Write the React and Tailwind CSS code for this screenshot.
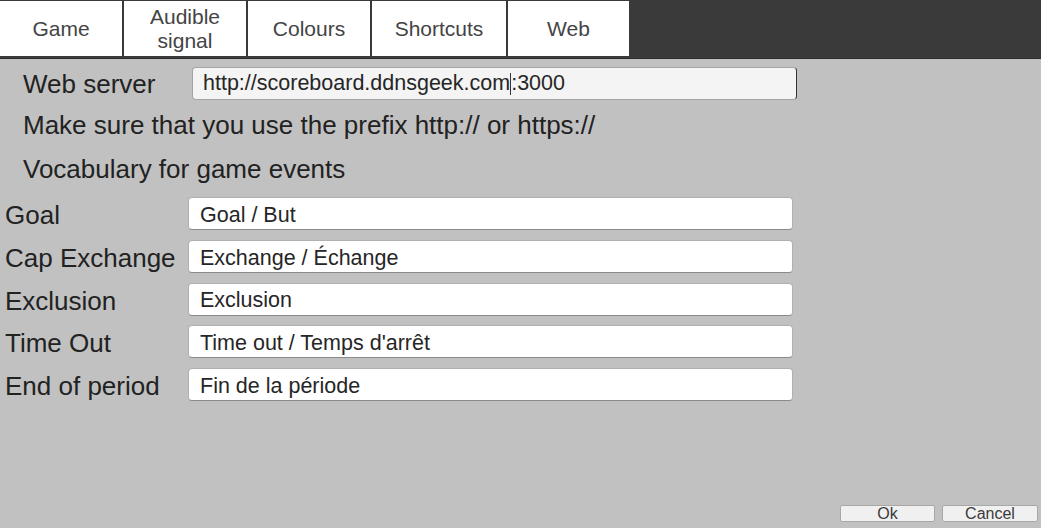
import React from 'react';

const tabs = [
  { label: 'Game', w: 'w-[122px]' },
  { label: 'Audible signal', w: 'w-[122px]', two: true },
  { label: 'Colours', w: 'w-[122px]' },
  { label: 'Shortcuts', w: 'w-[134px]' },
  { label: 'Web', w: 'w-[121px]' },
];

const events = [
  { label: 'Goal', value: 'Goal / But' },
  { label: 'Cap Exchange', value: 'Exchange / Échange' },
  { label: 'Exclusion', value: 'Exclusion' },
  { label: 'Time Out', value: "Time out / Temps d'arrêt" },
  { label: 'End of period', value: 'Fin de la période' },
];

export default function App() {
  return (
    <div
      className="h-screen w-full flex flex-col bg-[#c1c1c1] text-[#222] overflow-hidden"
      style={{ fontFamily: '"Liberation Sans", Arial, sans-serif' }}
    >
      {/* Tab bar */}
      <div className="h-[59px] bg-[#3a3a3a] flex gap-[2px] pt-px pb-[2px] border-b border-[#2e2e2e]">
        {tabs.map((t) => (
          <div
            key={t.label}
            className={`${t.w} bg-white flex items-center justify-center text-center text-[21px] leading-[24px] text-[#444]`}
          >
            {t.two ? (
              <span>
                Audible
                <br />
                signal
              </span>
            ) : (
              t.label
            )}
          </div>
        ))}
      </div>

      {/* Web server */}
      <div className="flex items-center mt-[8px] h-[33px]">
        <span className="pl-[23px] w-[192px] text-[26px] leading-[30px]">Web server</span>
        <div className="w-[605px] h-[33px] rounded-[4px] border border-[#a4a4a4] border-r-[#333] bg-[#f4f4f4] flex items-center pl-[10px] text-[21.5px] text-[#262626]">
          <span>http://scoreboard.ddnsgeek.com</span>
          <span className="w-px h-[22px] bg-[#333]" />
          <span>:3000</span>
        </div>
      </div>

      <p className="pl-[23px] mt-[10px] text-[26px] leading-[30px]">
        Make sure that you use the prefix http:// or https://
      </p>
      <p className="pl-[23px] mt-[14px] text-[26px] leading-[30px]">Vocabulary for game events</p>

      {/* Vocabulary rows */}
      <div className="flex flex-col gap-[9.75px] mt-[13px]">
        {events.map((e) => (
          <div key={e.label} className="flex items-center h-[33px]">
            <span className="pl-[5px] w-[188px] text-[26px] leading-[30px] mt-[3px]">{e.label}</span>
            <div className="w-[605px] h-[33px] rounded-[4px] border border-[#b0b0b0] border-b-[#8a8a8a] bg-white flex items-center pl-[11px] pt-[3px] text-[21.5px] text-[#262626]">
              {e.value}
            </div>
          </div>
        ))}
      </div>

      {/* Bottom buttons */}
      <div className="mt-auto flex justify-end gap-[7px] pr-[3px] pb-[6px]">
        <button className="w-[95px] h-[17px] bg-[#f0f0f0] border border-[#a8a8a8] rounded-[2px] text-[16px] leading-[15px] text-[#3a3a3a]">
          Ok
        </button>
        <button className="w-[96px] h-[17px] bg-[#f0f0f0] border border-[#a8a8a8] rounded-[2px] text-[16px] leading-[15px] text-[#3a3a3a]">
          Cancel
        </button>
      </div>
    </div>
  );
}
